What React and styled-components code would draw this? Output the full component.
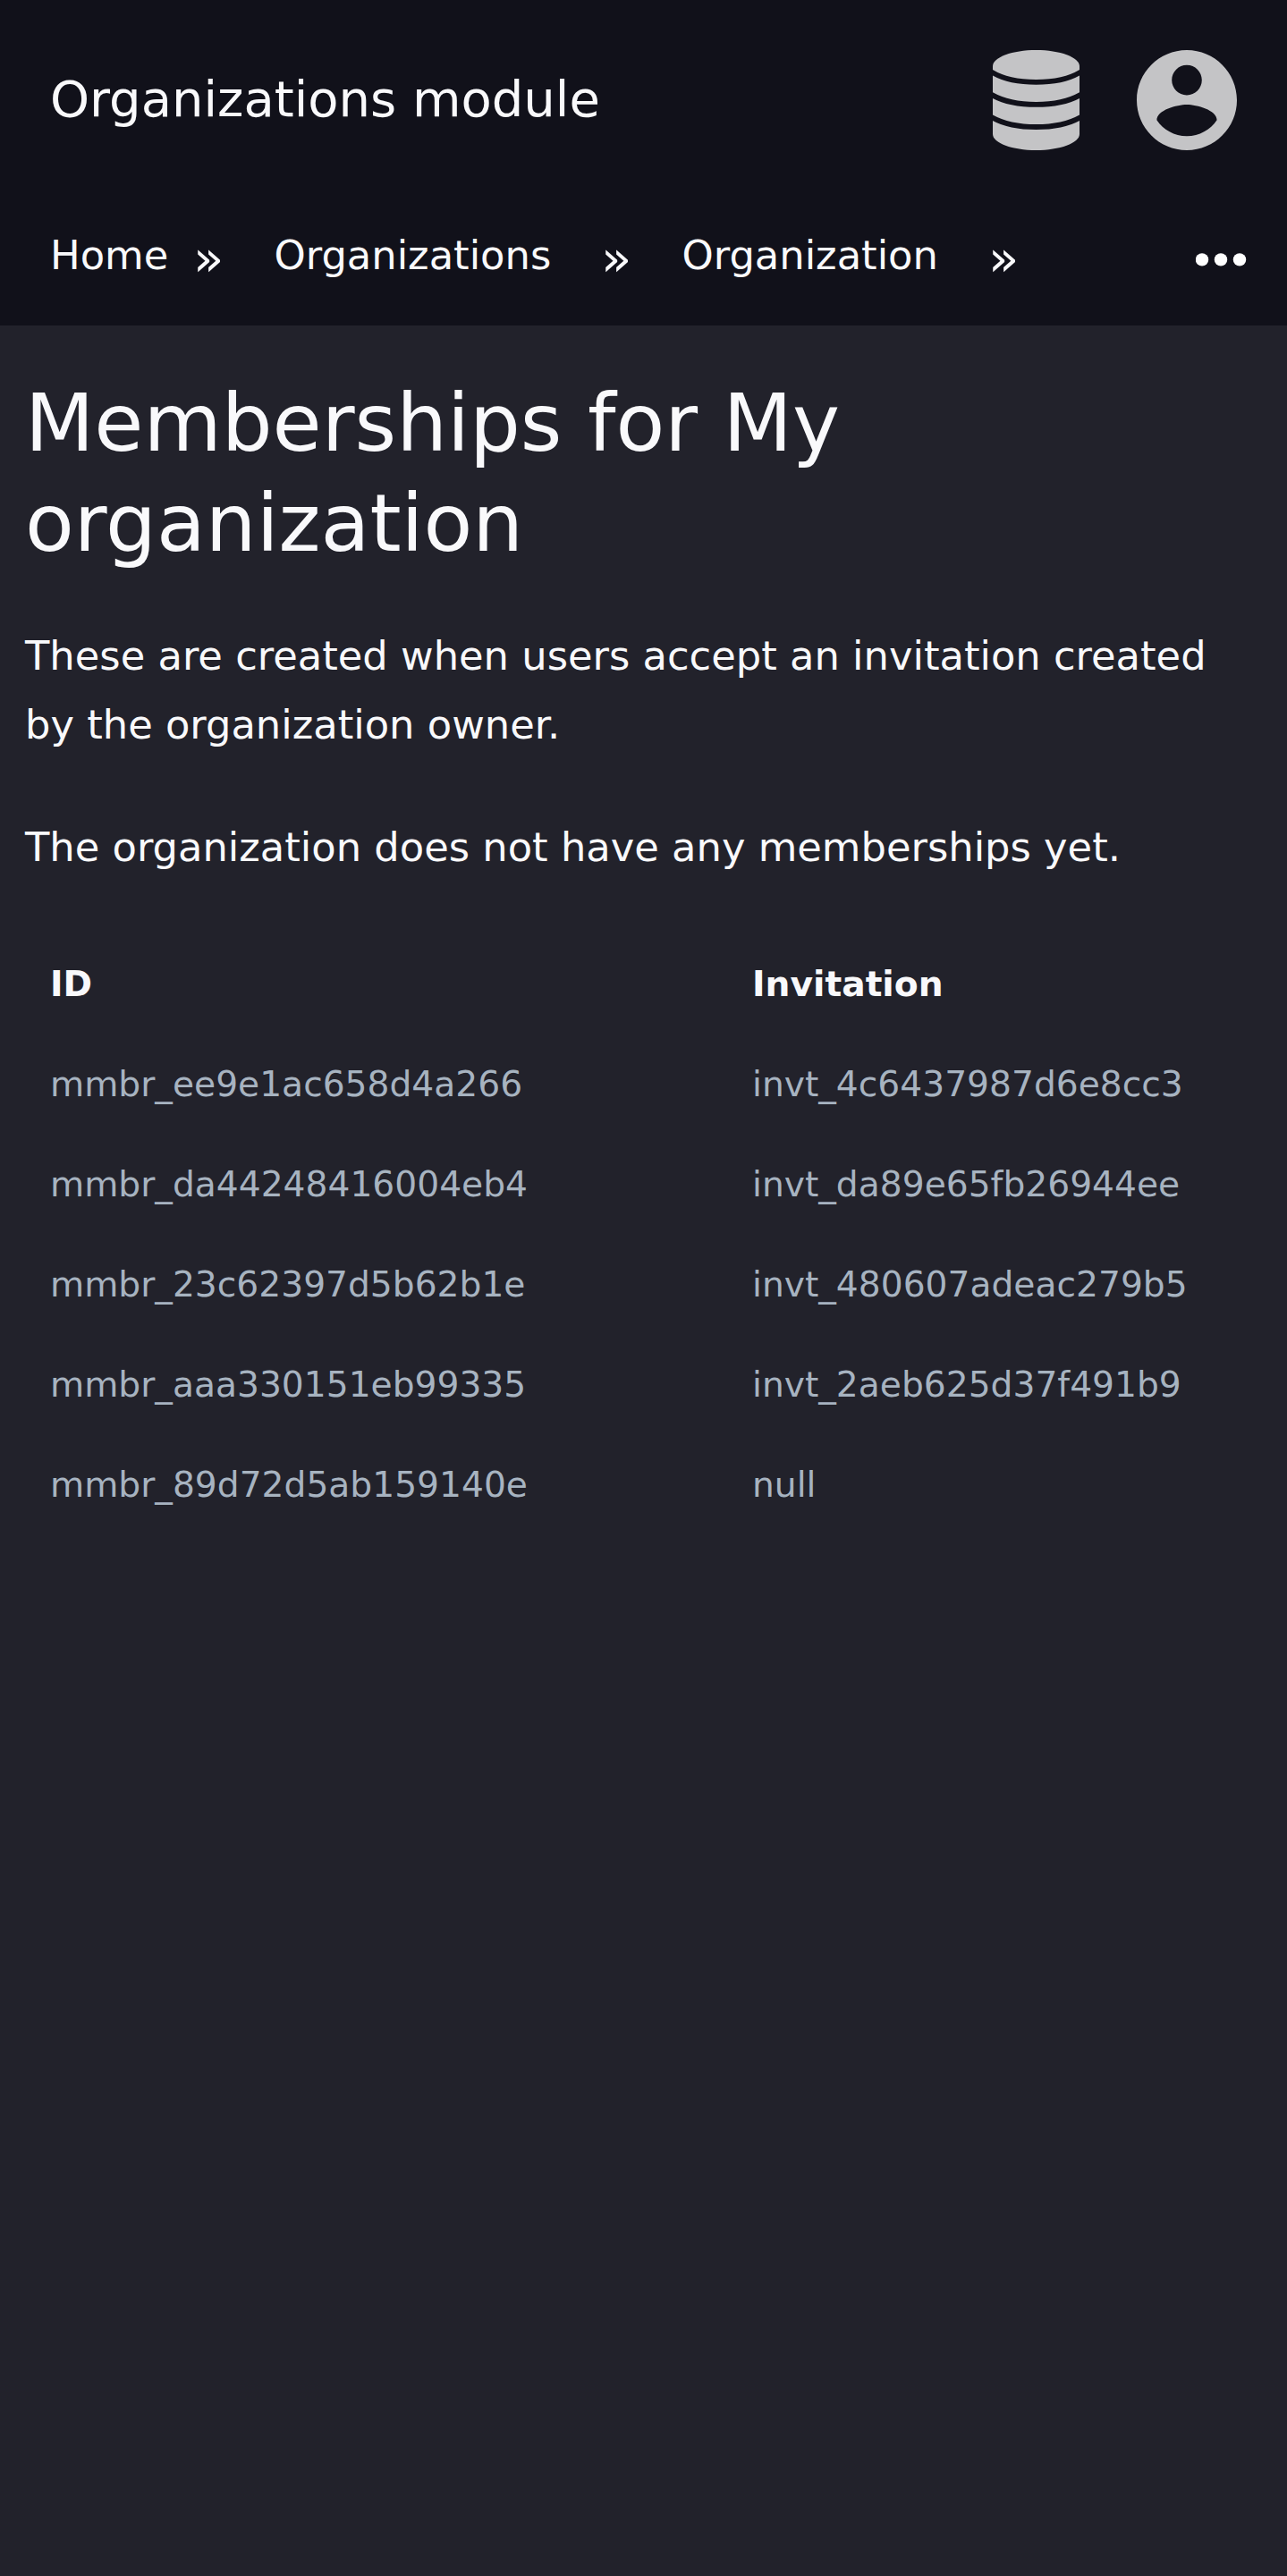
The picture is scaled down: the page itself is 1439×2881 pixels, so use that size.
import React from 'react';
import styled, { createGlobalStyle } from 'styled-components';

const GlobalStyle = createGlobalStyle`
  *, *::before, *::after { box-sizing: border-box; }
  body {
    margin: 0;
    background: #22222b;
    color: #f9f9fb;
    font-family: "DejaVu Sans", sans-serif;
  }
`;

const Page = styled.div`
  min-height: 2881px;
  background: #22222b;
`;

const Header = styled.header`
  height: 364px;
  background: #11111a;
`;

const TitleBar = styled.div`
  display: flex;
  align-items: center;
  height: 224px;
  padding: 0 56px;
`;

const ModuleName = styled.div`
  flex: 1;
  padding-bottom: 3px;
  font-size: 56px;
  line-height: 85px;
`;

const IconSvg = styled.svg`
  display: block;
  width: ${({ $width }) => $width}px;
  height: 112px;
  fill: #c4c4c6;
`;

const Actions = styled.div`
  display: flex;
  gap: 64px;
`;

const Breadcrumbs = styled.nav`
  display: flex;
  align-items: flex-start;
  height: 140px;
  padding: 32px 45px 0 56px;
`;

const Crumb = styled.a`
  width: ${({ $width }) => $width}px;
  padding-top: 1px;
  font-size: 44.8px;
  line-height: 57px;
  white-space: nowrap;
`;

const Separator = styled.span`
  width: 92.5px;
  padding-left: 2px;
  font-size: 56px;
  line-height: 65px;
`;

const MoreIcon = styled.svg`
  display: block;
  width: 57px;
  height: 15px;
  margin: 27px 0 0 auto;
  fill: #ffffff;
`;

const Main = styled.main`
  padding: 53px 28px 0;
`;

const Heading = styled.h1`
  margin: 0 0 54px;
  font-size: 89.6px;
  font-weight: 400;
  line-height: 112px;
`;

const Paragraph = styled.p`
  margin: 0 0 ${({ $gap }) => $gap}px;
  font-size: 44.8px;
  line-height: 77px;
`;

const Table = styled.table`
  width: 100%;
  border-collapse: collapse;
  table-layout: fixed;
  font-size: 39.2px;
  line-height: 57px;
`;

const HeadCell = styled.th`
  width: ${({ $width }) => $width};
  height: 112px;
  padding: 28px 28px 0;
  text-align: left;
  vertical-align: top;
  font-weight: 700;
`;

const Cell = styled.td`
  height: 112px;
  padding: 28px 28px 0;
  vertical-align: top;
  color: #a7b3c0;
`;

const crumbs = [
  { label: 'Home', width: 158 },
  { label: 'Organizations', width: 363.5 },
  { label: 'Organization', width: 340.5 },
];

const memberships = [
  { id: 'mmbr_ee9e1ac658d4a266', invitation: 'invt_4c6437987d6e8cc3' },
  { id: 'mmbr_da44248416004eb4', invitation: 'invt_da89e65fb26944ee' },
  { id: 'mmbr_23c62397d5b62b1e', invitation: 'invt_480607adeac279b5' },
  { id: 'mmbr_aaa330151eb99335', invitation: 'invt_2aeb625d37f491b9' },
  { id: 'mmbr_89d72d5ab159140e', invitation: 'null' },
];

function DatabaseIcon() {
  return (
    <IconSvg $width={97} viewBox="0 0 97 112">
      <path d="M0 18C0 8 22 0 48.500 0S97 8 97 18V22Q79 33 48.500 33T0 22Z" />
      <path d="M0 28.500Q18 38.700 48.500 38.700T97 28.500V47.300Q78 58 48.500 58T0 47.300Z" />
      <path d="M0 54Q18 63.800 48.500 63.800T97 54V72.400Q78 83 48.500 83T0 72.400Z" />
      <path d="M0 79Q18 89 48.500 89T97 79V94C97 104 75 112 48.500 112S0 104 0 94Z" />
    </IconSvg>
  );
}

function AccountIcon() {
  return (
    <IconSvg $width={112} viewBox="2 2 20 20">
      <path d="M12 2C6.480 2 2 6.480 2 12s4.480 10 10 10 10-4.480 10-10S17.520 2 12 2zm0 3c1.660 0 3 1.340 3 3s-1.340 3-3 3-3-1.340-3-3 1.340-3 3-3zm0 14.200c-2.500 0-4.710-1.280-6-3.220.03-1.990 4-3.080 6-3.080 1.990 0 5.970 1.090 6 3.080-1.290 1.940-3.500 3.220-6 3.220z" />
    </IconSvg>
  );
}

export default function App() {
  return (
    <Page>
      <GlobalStyle />
      <Header>
        <TitleBar>
          <ModuleName>Organizations module</ModuleName>
          <Actions>
            <DatabaseIcon />
            <AccountIcon />
          </Actions>
        </TitleBar>
        <Breadcrumbs>
          {crumbs.map(({ label, width }) => (
            <React.Fragment key={label}>
              <Crumb $width={width}>{label}</Crumb>
              <Separator>»</Separator>
            </React.Fragment>
          ))}
          <MoreIcon viewBox="0 0 57 15">
            <circle cx="7" cy="7.4" r="7.2" />
            <circle cx="28" cy="7.4" r="7.2" />
            <circle cx="49" cy="7.4" r="7.2" />
          </MoreIcon>
        </Breadcrumbs>
      </Header>
      <Main>
        <Heading>Memberships for My organization</Heading>
        <Paragraph $gap={60}>
          These are created when users accept an invitation created by the organization owner.
        </Paragraph>
        <Paragraph $gap={58}>The organization does not have any memberships yet.</Paragraph>
        <Table>
          <thead>
            <tr>
              <HeadCell $width="785px">ID</HeadCell>
              <HeadCell $width="auto">Invitation</HeadCell>
            </tr>
          </thead>
          <tbody>
            {memberships.map(({ id, invitation }) => (
              <tr key={id}>
                <Cell>{id}</Cell>
                <Cell>{invitation}</Cell>
              </tr>
            ))}
          </tbody>
        </Table>
      </Main>
    </Page>
  );
}
